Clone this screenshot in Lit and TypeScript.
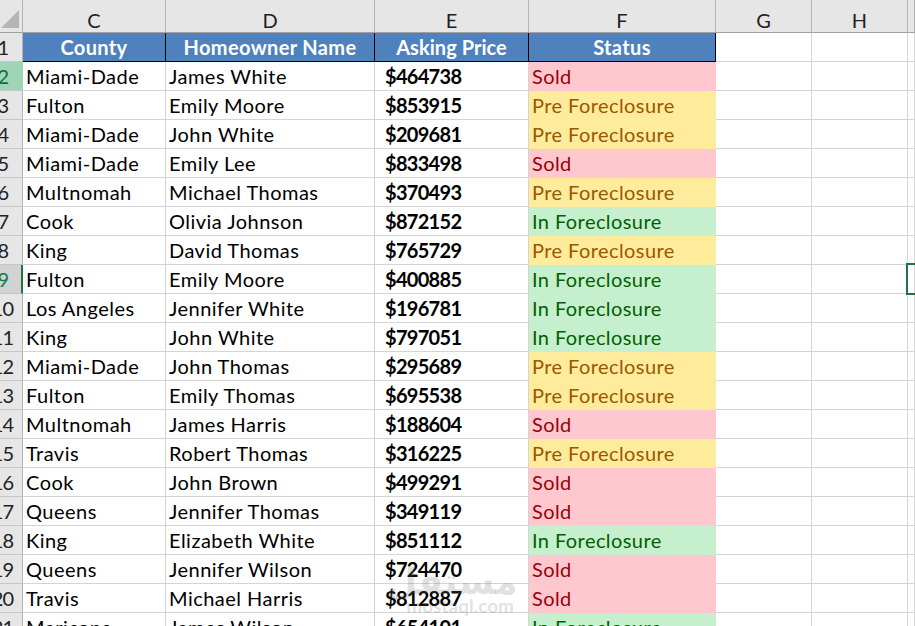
import { LitElement, html, css, svg } from "lit";
import { customElement } from "lit/decorators.js";

type Status = "Sold" | "Pre Foreclosure" | "In Foreclosure";
const rows: [string, string, string, Status][] = [
  ["Miami-Dade", "James White", "$464738", "Sold"],
  ["Fulton", "Emily Moore", "$853915", "Pre Foreclosure"],
  ["Miami-Dade", "John White", "$209681", "Pre Foreclosure"],
  ["Miami-Dade", "Emily Lee", "$833498", "Sold"],
  ["Multnomah", "Michael Thomas", "$370493", "Pre Foreclosure"],
  ["Cook", "Olivia Johnson", "$872152", "In Foreclosure"],
  ["King", "David Thomas", "$765729", "Pre Foreclosure"],
  ["Fulton", "Emily Moore", "$400885", "In Foreclosure"],
  ["Los Angeles", "Jennifer White", "$196781", "In Foreclosure"],
  ["King", "John White", "$797051", "In Foreclosure"],
  ["Miami-Dade", "John Thomas", "$295689", "Pre Foreclosure"],
  ["Fulton", "Emily Thomas", "$695538", "Pre Foreclosure"],
  ["Multnomah", "James Harris", "$188604", "Sold"],
  ["Travis", "Robert Thomas", "$316225", "Pre Foreclosure"],
  ["Cook", "John Brown", "$499291", "Sold"],
  ["Queens", "Jennifer Thomas", "$349119", "Sold"],
  ["King", "Elizabeth White", "$851112", "In Foreclosure"],
  ["Queens", "Jennifer Wilson", "$724470", "Sold"],
  ["Travis", "Michael Harris", "$812887", "Sold"],
  ["Maricopa", "James Wilson", "$654101", "In Foreclosure"],
];
const statusClass: Record<Status, string> = {
  Sold: "sold",
  "Pre Foreclosure": "pre",
  "In Foreclosure": "in",
};

@customElement("app-root")
export class AppRoot extends LitElement {
  static styles = css`
    :host {
      display: block;
      position: relative;
      width: 915px;
      height: 626px;
      overflow: hidden;
      background: #fff;
      font-family: Lato, "Liberation Sans", sans-serif;
      font-size: 20px;
      color: #000;
    }
    .sheet {
      display: grid;
      grid-template-columns: 23px 143px 209px 154px 187px 96px 96px 7px;
      grid-auto-rows: 29px;
      grid-template-rows: 33px;
    }
    .c {
      box-sizing: border-box;
      border-right: 1px solid #d4d4d4;
      border-bottom: 1px solid #d4d4d4;
      padding-left: 3px;
      line-height: 29px;
      white-space: nowrap;
      overflow: hidden;
      letter-spacing: 0.47px;
    }
    .ch {
      background: #e6e6e6;
      border-right: 1px solid #b4b4b4;
      border-bottom: 1px solid #a0a0a0;
      text-align: center;
      padding: 8px 0 0;
      line-height: 24px;
      color: #222;
      letter-spacing: 0;
    }
    .corner {
      padding: 0;
      display: flex;
    }
    .corner svg { display: block; }
    .rh {
      background: #e6e6e6;
      border-right: 1px solid #b4b4b4;
      border-bottom: 1px solid #c6c6c6;
      padding: 0;
      color: #222;
      letter-spacing: -1px;
    }
    .rh span {
      display: block;
      width: 40px;
      margin-left: -32px;
      text-align: right;
    }
    .rh span.dbl { margin-left: -27px; }
    .rh.active { background: #9fd5b7; color: #0f6b3e; border-right-color: #9fd5b7; }
    .rh.sel { background: #d2d2d2; color: #0f7b4b; border-right: 2px solid #217346; }
    .hd {
      background: #4f81bd;
      color: #fff;
      font-weight: 700;
      text-align: center;
      padding: 0;
      border-right: 1px solid #000;
      border-bottom: 1px solid #000;
      letter-spacing: 0.35px;
    }
    .hd.tight { letter-spacing: 0.05px; }
    .num { font-weight: 700; padding-left: 10px; letter-spacing: -0.7px; }
    .st { padding-left: 3px; border-right: 1px solid transparent; border-bottom: 1px solid transparent; letter-spacing: 0.42px; }
    .sold { background: #ffc7ce; color: #9c0006; }
    .pre { background: #ffeb9c; color: #9c5700; }
    .in { background: #c6efce; color: #006100; }
    .selbox {
      position: absolute;
      left: 906px;
      top: 263px;
      width: 12px;
      height: 32px;
      box-sizing: border-box;
      border: 2px solid #217346;
    }
    .wm {
      position: absolute;
      left: 386px;
      top: 566px;
      width: 128px;
      text-align: right;
      color: rgba(120, 120, 120, 0.22);
      pointer-events: none;
    }
    .wm .ar { font-family: "Noto Sans", "DejaVu Sans", sans-serif; font-size: 36px; font-weight: 700; line-height: 30px; }
    .wm .en { font-size: 19px; font-weight: 700; line-height: 20px; }
  `;

  render() {
    const cols = ["C", "D", "E", "F", "G", "H", ""];
    return html`
      <div class="sheet">
        <div class="c ch corner">
          <svg width="22" height="32" viewBox="0 0 22 32">
            ${svg`<polygon points="1,28 19,28 19,10" fill="#b5b5b5" />`}
          </svg>
        </div>
        ${cols.map((c) => html`<div class="c ch">${c}</div>`)}
        <div class="c rh"><span>1</span></div>
        <div class="c hd">County</div>
        <div class="c hd">Homeowner Name</div>
        <div class="c hd tight">Asking Price</div>
        <div class="c hd">Status</div>
        <div class="c"></div><div class="c"></div><div class="c"></div>
        ${rows.map(
          (r, i) => html`
            <div class="c rh ${i === 0 ? "active" : i === 7 ? "sel" : ""}"><span class="${i + 2 >= 10 ? "dbl" : ""}">${i + 2}</span></div>
            <div class="c">${r[0]}</div>
            <div class="c">${r[1]}</div>
            <div class="c num">${r[2]}</div>
            <div class="c st ${statusClass[r[3]]}">${r[3]}</div>
            <div class="c"></div><div class="c"></div><div class="c"></div>
          `
        )}
      </div>
      <div class="selbox"></div>
      <div class="wm"><div class="ar">مستقل</div><div class="en">mostaql.com</div></div>
    `;
  }
}
